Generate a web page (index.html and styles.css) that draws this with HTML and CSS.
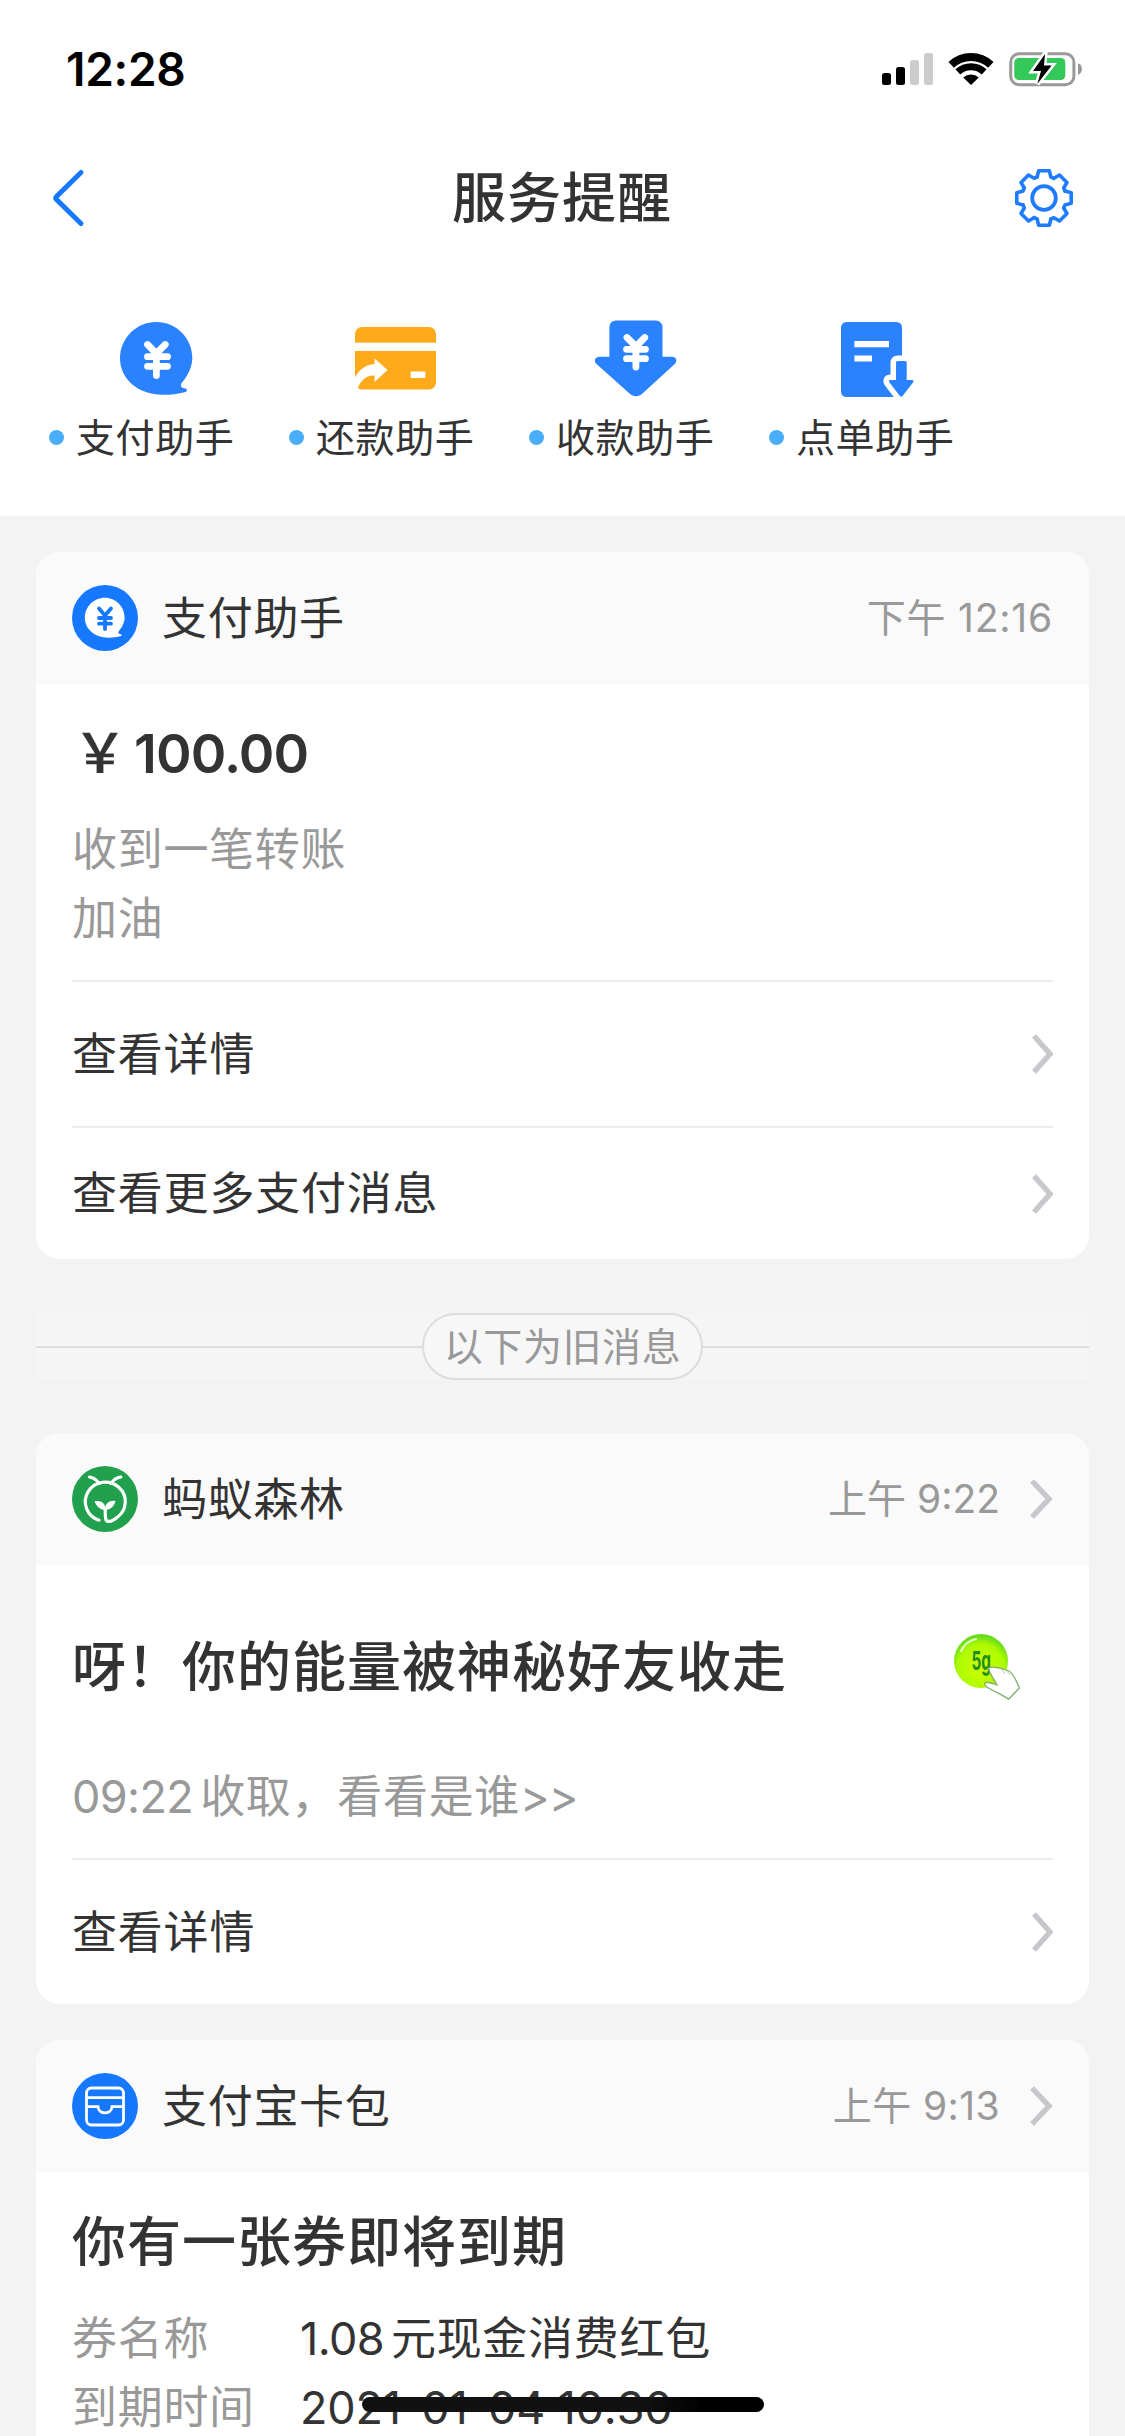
FILE: index.html
```html
<!DOCTYPE html>
<html lang="zh-CN">
<head>
<meta charset="utf-8">
<title>服务提醒</title>
<link rel="stylesheet" href="styles.css">
</head>
<body>
<svg width="0" height="0" class="defs">
  <defs>
    <path id="bubble" d="M45.3 4C65 4 81.3 20 81.3 40C81.3 49 76.5 58 71 64.500C69 67.500 70 69.800 73 70.200C77 70.800 76.800 73.500 73.500 74.200C68 75.800 60 76.800 52 76.800C26 76.800 9 60 9 40.500C9 20 25.500 4 45.300 4Z"/>
    <path id="gear-tooth" d="M-6.900-21L-5.300-27.200H5.300L6.900-21L9.970-19.700"/>
    <radialGradient id="energy" cx=".5" cy=".62" r=".58">
      <stop offset="0" stop-color="#ceff00"/><stop offset=".75" stop-color="#adfa00"/><stop offset="1" stop-color="#66dc1c"/>
    </radialGradient>
  </defs>
</svg>
<div class="screen">
  <header class="top">
    <div class="status">
      <span class="clock">12:28</span>
      <div class="indicators">
        <svg class="signal" viewBox="0 0 51 33"><rect y="21" width="9" height="12" rx="2.500"/><rect x="14" y="15" width="9" height="18" rx="2.500"/><g fill="#ccc"><rect x="28" y="8" width="9" height="25" rx="2.500"/><rect x="42" y="1" width="9" height="32" rx="2.500"/></g></svg>
        <svg class="wifi" viewBox="0 0 46 33"><g fill="none" stroke="#000"><path stroke-width="8" d="M3.200 12.800A29 29 0 0 1 42.800 12.800"/><path stroke-width="7" d="M9.800 19.900A19.300 19.300 0 0 1 36.200 19.900"/></g><path d="M15.200 25.600A11.500 11.500 0 0 1 30.800 25.600L23 33Z"/></svg>
        <svg class="battery" viewBox="0 0 75 38"><rect x="2.700" y="3.700" width="63.200" height="31" rx="8.500" fill="none" stroke="#999" stroke-width="3"/><rect x="6.300" y="8" width="51" height="22" rx="4.500" fill="#34c759"/><path d="M70 13.200C75.300 15 75.300 23.200 70 25Z" fill="#999"/><path d="M37 4L25 21H33L29.300 34L43.700 15.500H36Z" stroke="#fff" stroke-width="5"/><path d="M37 4L25 21H33L29.300 34L43.700 15.500H36Z"/></svg>
      </div>
    </div>
    <nav class="nav">
      <svg class="back" viewBox="0 0 34 60"><path d="M30 4.500L5.500 28.500Q4 30 5.500 31.500L30 55.500"/></svg>
      <h1>服务提醒</h1>
      <svg class="gear" viewBox="-30 -30 60 60"><use href="#gear-tooth"/><use href="#gear-tooth" transform="rotate(45)"/><use href="#gear-tooth" transform="rotate(90)"/><use href="#gear-tooth" transform="rotate(135)"/><use href="#gear-tooth" transform="rotate(180)"/><use href="#gear-tooth" transform="rotate(225)"/><use href="#gear-tooth" transform="rotate(270)"/><use href="#gear-tooth" transform="rotate(315)"/><circle r="11.800" stroke-width="3.800"/></svg>
    </nav>
    <div class="helpers">
      <div class="helper">
        <svg viewBox="0 0 90 82"><use href="#bubble" fill="#2a82ff"/><path class="yen" d="M36.500 26.500L45.400 35.500L54.300 26.500M45.400 36V57.500M36.500 38.700H56.500M36.500 48.300H56.500"/></svg>
        <span>支付助手</span>
      </div>
      <div class="helper">
        <svg viewBox="0 0 90 82"><rect x="4" y="9" width="81" height="62.500" rx="7" fill="#ffaa1a"/><g fill="#fff"><rect x="3" y="24.700" width="83" height="8.300"/><rect x="59.700" y="53.500" width="14.600" height="6.500"/><path d="M23.600 40.500L36.500 52L23.600 64V57.500C16 57 10.500 61.500 7 69.500L3 73V61C8.500 51 15 46.500 23.600 46Z"/></g></svg>
        <span>还款助手</span>
      </div>
      <div class="helper">
        <svg viewBox="0 0 90 82"><path fill="#2a82ff" d="M25 2.500H65A6.500 6.500 0 0 1 71.500 9V38.700H81C85.500 38.700 86.500 43 84 45.700L51.500 75.500C47.500 79 42.500 79 38.500 75.500L5.500 46C2.500 43 4 38.700 8.500 38.700H18.400V9A6.500 6.500 0 0 1 25 2.500Z"/><path class="yen" d="M36 19.500L44.900 28.500L53.800 19.500M44.900 29V49M35.500 31.300H54.500M35.500 40.700H54.500"/></svg>
        <span>收款助手</span>
      </div>
      <div class="helper">
        <svg viewBox="0 0 90 82"><rect x="10" y="4" width="61" height="75" rx="5.500" fill="#2a82ff"/><path fill="#fff" d="M23.400 23H58V29.300H23.400ZM23.400 37.500H41V43.500H23.400Z"/><path d="M66.500 43H74.200Q75.700 43 75.700 44.500V62H81Q83.500 62 82 64.500L71.500 78Q70.200 79.500 68.900 78L58.500 64.500Q57 62 59.500 62H65V44.500Q65 43 66.500 43Z" fill="#2a82ff" stroke="#fff" stroke-width="11" paint-order="stroke" stroke-linejoin="round"/></svg>
        <span>点单助手</span>
      </div>
    </div>
  </header>

  <main class="feed">
    <section class="card">
      <div class="card-head">
        <svg class="logo" viewBox="0 0 66 66"><circle cx="33" cy="33" r="33" fill="#1677ff"/><use href="#bubble" fill="#fff" transform="translate(7.900 10.500) scale(.55)"/><path d="M27 23.500L33 30.500L39 23.500M33 31V44M27 33H39M27 38.700H39" fill="none" stroke="#1677ff" stroke-width="3.800" stroke-linecap="round"/></svg>
        <h2>支付助手</h2>
        <time class="wide">下午 12:16</time>
      </div>
      <div class="card-body pay">
        <p class="amount"><span class="currency">￥</span>100.00</p>
        <p class="muted">收到一笔转账</p>
        <p class="muted">加油</p>
      </div>
      <a class="row">查看详情<svg class="chevron" viewBox="0 0 24 42"><path d="M5 3L21 21L5 39"/></svg></a>
      <a class="row short">查看更多支付消息<svg class="chevron" viewBox="0 0 24 42"><path d="M5 3L21 21L5 39"/></svg></a>
    </section>

    <div class="separator"><span>以下为旧消息</span></div>

    <section class="card">
      <div class="card-head">
        <svg class="logo" viewBox="0 0 66 66"><circle cx="33" cy="33" r="33" fill="#21a04d"/><g fill="none" stroke="#fff" stroke-width="3.200" stroke-linecap="round"><path d="M27 54.200A20 19.500 0 1 1 45 51.500C41 55 36 57 34 54Q33.200 52 33.200 43"/><path d="M17.500 11Q23.500 12 27 17.500M48.800 11Q42.500 12 39 17.500"/></g><path d="M22.500 35.500C28 34 33 37 33.200 41.500C34 37 38 34 43.500 35C42 40.500 38.500 43.500 33.200 44C28 43.500 24.500 40.500 22.500 35.500Z" fill="#fff"/></svg>
        <h2>蚂蚁森林</h2>
        <time>上午 9:22</time>
        <svg class="chevron" viewBox="0 0 24 42"><path d="M3 3L20 21L3 39"/></svg>
      </div>
      <div class="card-body forest">
        <div class="headline">
          <h3>呀！你的能量被神秘好友收走</h3>
          <svg class="energy" viewBox="0 0 66 66"><circle cx="27" cy="27" r="27" fill="url(#energy)"/><path d="M7 17Q12 7 22 5" fill="none" stroke="#e4ffc0" stroke-width="2.200" stroke-linecap="round"/><text x="17.500" y="35.500" textLength="19.500" lengthAdjust="spacingAndGlyphs">5g</text><path d="M34.500 34C38 32 42 33.500 47 34.500L55 37C60 40 62 47 65.500 54L54.500 65.300C49 61 41 58 33 53C29 51 31 48 34 48.500C37 48.500 40 50 43 51C40 45 36 41 34.500 34Z" fill="#fff" stroke="#7fae6c" stroke-width="1.300"/><path d="M47 34.500L51 40M52 36L56 41" fill="none" stroke="#b5cfa8" stroke-width="1"/></svg>
        </div>
        <p class="muted"><span class="stamp">09:22</span>收取，看看是谁<span class="arrows">&gt;&gt;</span></p>
      </div>
      <a class="row">查看详情<svg class="chevron" viewBox="0 0 24 42"><path d="M5 3L21 21L5 39"/></svg></a>
    </section>

    <section class="card last">
      <div class="card-head">
        <svg class="logo" viewBox="0 0 66 66"><circle cx="33" cy="33" r="33" fill="#1677ff"/><g fill="none" stroke="#fff" stroke-width="2.800"><rect x="14.500" y="15" width="37" height="37" rx="5"/><path d="M14.500 24.700H51.500M14.500 33.700H26C26.500 42 39.500 42 40 33.700H51.500"/></g></svg>
        <h2>支付宝卡包</h2>
        <time class="semiwide">上午 9:13</time>
        <svg class="chevron" viewBox="0 0 24 42"><path d="M3 3L20 21L3 39"/></svg>
      </div>
      <div class="card-body coupon">
        <h3>你有一张券即将到期</h3>
        <dl>
          <dt>券名称</dt><dd><span class="number">1.08</span>元现金消费红包</dd>
          <dt>到期时间</dt><dd class="date">2021-01-04 10:30</dd>
        </dl>
      </div>
    </section>
  </main>
  <div class="home-indicator"></div>
</div>
</body>
</html>
```
FILE: styles.css
```css
* { box-sizing: border-box; margin: 0; padding: 0; }

body {
  width: 1125px;
  background: #f3f3f3;
  color: #333;
  font-family: Inter, "Noto Sans CJK SC", sans-serif;
  font-size: 45px;
  line-height: 69px;
}

svg { display: block; flex: none; }
.defs { position: absolute; }

.screen {
  position: relative;
  height: 2436px;
  overflow: hidden;
}

.top { height: 516px; background: #fff; }

.status {
  display: flex;
  justify-content: space-between;
  height: 132px;
  padding: 50px 42px 0 66px;
}
.clock {
  height: 38px;
  color: #000;
  font-size: 46px;
  font-weight: 600;
  letter-spacing: -.3px;
  line-height: 38px;
}
.indicators { display: flex; }
.signal { width: 51px; height: 33px; margin: 2px 15px 0 0; }
.wifi { width: 46px; height: 33px; margin: 2px 14px 0 0; }
.battery { width: 75px; height: 38px; }

.nav {
  display: flex;
  align-items: center;
  justify-content: space-between;
  height: 132px;
  padding: 0 51px;
}
.back { width: 34px; height: 60px; fill: none; stroke: #1677ff; stroke-width: 5; stroke-linecap: round; }
.nav h1 { margin-left: 25px; font-size: 54px; font-weight: 500; letter-spacing: 1px; }
.gear { width: 60px; height: 60px; fill: none; stroke: #1f7bff; stroke-width: 3.6; stroke-linecap: round; stroke-linejoin: round; }

.helpers { display: flex; padding: 54px 0 0 49px; }
.helper { width: 240px; }
.helper svg { width: 90px; height: 82px; margin-left: 62px; }
.helper span {
  display: flex;
  align-items: center;
  gap: 12px;
  height: 60px;
  margin-top: 7px;
  font-size: 39px;
  letter-spacing: .6px;
  white-space: nowrap;
}
.helper span::before {
  content: "";
  width: 15px;
  height: 15px;
  border-radius: 50%;
  background: #49adf8;
}
.yen { fill: none; stroke: #fff; stroke-width: 6.8; stroke-linecap: round; stroke-linejoin: round; }

.feed { padding: 36px 36px 0; }
.card {
  margin-bottom: 36px;
  border-radius: 24px;
  background: #fff;
  overflow: hidden;
}
.card-head {
  display: flex;
  align-items: center;
  height: 132px;
  padding: 0 36px;
  background: #fafafa;
}
.logo { width: 66px; height: 66px; margin-right: 24px; }
.card-head h2 {
  flex: 1;
  font-size: 45px;
  font-weight: 400;
  letter-spacing: .7px;
}
.card-head time { color: #999; font-size: 39px; line-height: 60px; padding-bottom: 1px; }
.card-head .wide { letter-spacing: .8px; }
.card-head .semiwide { letter-spacing: .4px; }
.chevron {
  width: 24px;
  height: 42px;
  fill: none;
  stroke: #c7c7cc;
  stroke-width: 5.4;
}
.card-head .chevron { margin-left: 29px; }

.card-body { margin: 0 36px; border-bottom: 2px solid #ececec; }
.muted { color: #999; letter-spacing: .7px; }

.pay { height: 298px; padding-top: 35px; }
.amount { margin-bottom: 27px; font-size: 54px; font-weight: 600; letter-spacing: -.9px; }
.currency {
  display: inline-block;
  width: 62px;
  padding-left: 1px;
  font-weight: 500;
  -webkit-text-stroke: .3px #333;
}

.row {
  display: flex;
  align-items: center;
  justify-content: space-between;
  height: 144px;
  margin: 0 36px;
  letter-spacing: .8px;
}
.row.short { height: 133px; border-top: 2px solid #ececec; }

.separator {
  display: flex;
  align-items: center;
  height: 67px;
  margin: 54px 0 53px;
  background: #f5f5f5;
  color: #999;
  font-size: 39px;
}
.separator::before,
.separator::after { content: ""; flex: 1; height: 2px; background: #ddd; }
.separator span {
  width: 281px;
  height: 67px;
  border: 2px solid #ddd;
  border-radius: 34px;
  background: #f7f7f7;
  line-height: 63px;
  letter-spacing: .6px;
  text-align: center;
}

.card h3 { font-size: 54px; font-weight: 500; letter-spacing: 1px; white-space: nowrap; }
.forest { height: 295px; padding-top: 67px; }
.forest h3 { padding-top: 2px; }
.headline { display: flex; align-items: center; justify-content: space-between; height: 69px; padding-right: 33px; margin-bottom: 61px; }
.energy { width: 66px; height: 66px; }
.energy text { fill: #1d8f1d; font-size: 26px; font-weight: 700; }
.stamp { margin-right: 7px; letter-spacing: -.6px; }
.arrows { letter-spacing: -1.2px; }

.coupon { padding-top: 36px; border: 0; }
.coupon dl { display: grid; grid-template-columns: 228px 1fr; margin-top: 27px; }
.coupon dt { color: #999; letter-spacing: .7px; }
.coupon dd { letter-spacing: .7px; }
.number { margin-right: 7px; letter-spacing: -.6px; }
.coupon .date { letter-spacing: -.2px; }
.last { padding-bottom: 60px; }

.home-indicator {
  position: absolute;
  left: 362px;
  top: 2397px;
  width: 402px;
  height: 15px;
  border-radius: 8px;
  background: linear-gradient(90deg, #111 70%, #000 85%);
}
```
